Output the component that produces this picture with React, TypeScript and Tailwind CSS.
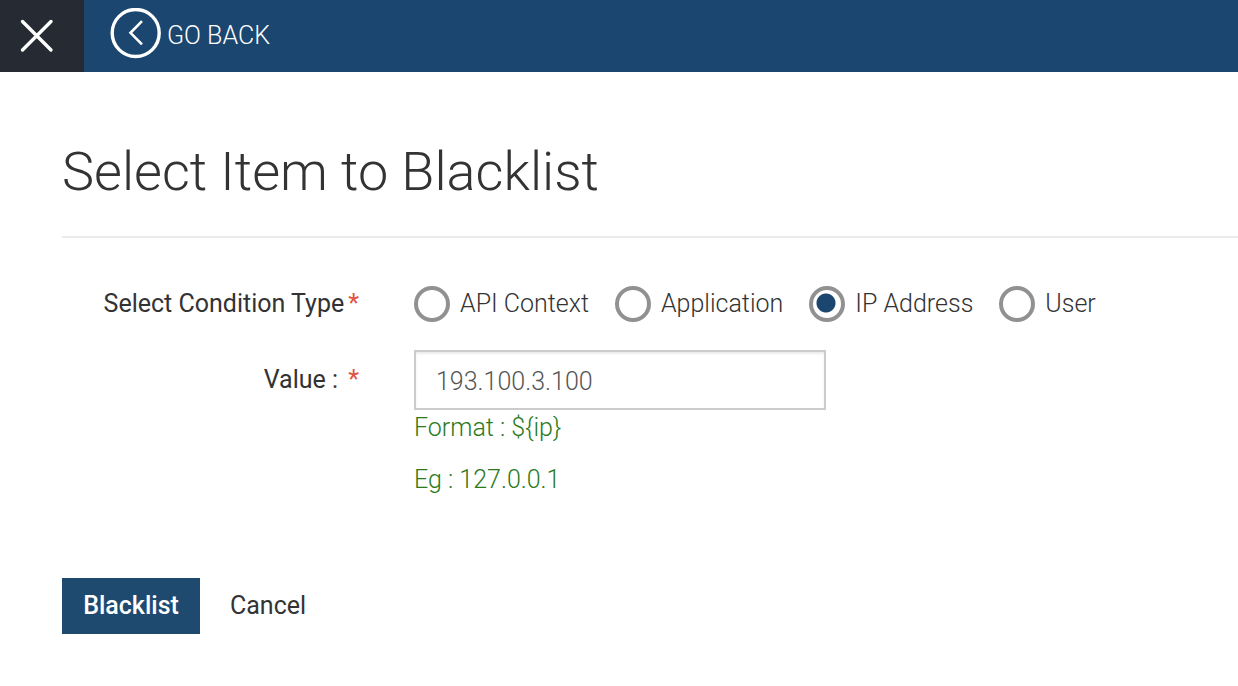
import { useState } from "react";

const conditions = ["API Context", "Application", "IP Address", "User"];

export default function App() {
  const [selected, setSelected] = useState("IP Address");
  const [value, setValue] = useState("193.100.3.100");
  return (
    <div className="min-h-screen bg-white font-['Roboto',sans-serif] text-[25px] leading-8 font-light text-[#333]">
      <header className="flex h-18 items-center bg-[#1b466f] text-white">
        <button aria-label="Close" className="flex h-18 w-21 items-center bg-[#262a33] pl-5">
          <svg width="34" height="34" viewBox="0 0 34 34" fill="none" stroke="currentColor" strokeWidth="3.4" strokeLinecap="round">
            <path d="M2.5 2.5 31 31M31 2.5 2.5 31" />
          </svg>
        </button>
        <a href="#back" className="flex items-center gap-1.5 pl-6.5">
          <svg className="mb-1.5" width="51" height="51" viewBox="0 0 51 51" fill="none" stroke="currentColor" strokeWidth="3.4">
            <circle cx="25.7" cy="25" r="23.5" />
            <path d="M32 13.1 20.5 24.8 32 36.4" strokeWidth="2.6" />
          </svg>
          <span>GO BACK</span>
        </a>
      </header>
      <main className="pl-[62px]">
        <h1 className="border-b-2 border-[#ebebeb] pt-[66px] pb-[30px] text-[54px] leading-[68px]">Select Item to Blacklist</h1>
        <form onSubmit={(e) => e.preventDefault()}>
          <fieldset aria-labelledby="condition-label" className="flex items-center pt-12">
            <div id="condition-label" className="w-[297px] shrink-0 text-right font-normal">
              Select Condition Type<span className="pl-1 text-[#e0533f]">*</span>
            </div>
            <div className="flex gap-[26px] pl-[55px]">
              {conditions.map((name) => (
                <label key={name} className="flex shrink-0 items-center gap-2.5">
                  <input
                    type="radio"
                    name="condition"
                    checked={selected === name}
                    onChange={() => setSelected(name)}
                    className="size-9 appearance-none rounded-full border-4 border-[#919191] bg-white checked:bg-[radial-gradient(circle_at_13px_13px,#1b466f_9px,white_10px)]"
                  />
                  {name}
                </label>
              ))}
            </div>
          </fieldset>
          <div className="flex items-start pt-7">
            <label htmlFor="value" className="w-[297px] shrink-0 pt-3.5 text-right font-normal">
              Value : <span className="pl-1 text-[#e0533f]">*</span>
            </label>
            <div className="pl-[55px]">
              <input
                id="value"
                value={value}
                onChange={(e) => setValue(e.target.value)}
                className="block h-15 w-[412px] border-2 border-[#ccc] px-5 pt-0.5 text-[#555] shadow-[inset_0_2px_2px_#00000013]"
              />
              <p className="pt-0.5 text-[#2a7a1b]">Format : ${"{ip}"}</p>
              <p className="pt-5 text-[#2a7a1b]">Eg : 127.0.0.1</p>
            </div>
          </div>
          <div className="flex gap-[30px] pt-[82px]">
            <button type="submit" className="h-14 w-[138px] bg-[#1f4a70] font-medium text-white">Blacklist</button>
            <button type="button" className="h-14 font-normal">Cancel</button>
          </div>
        </form>
      </main>
    </div>
  );
}
